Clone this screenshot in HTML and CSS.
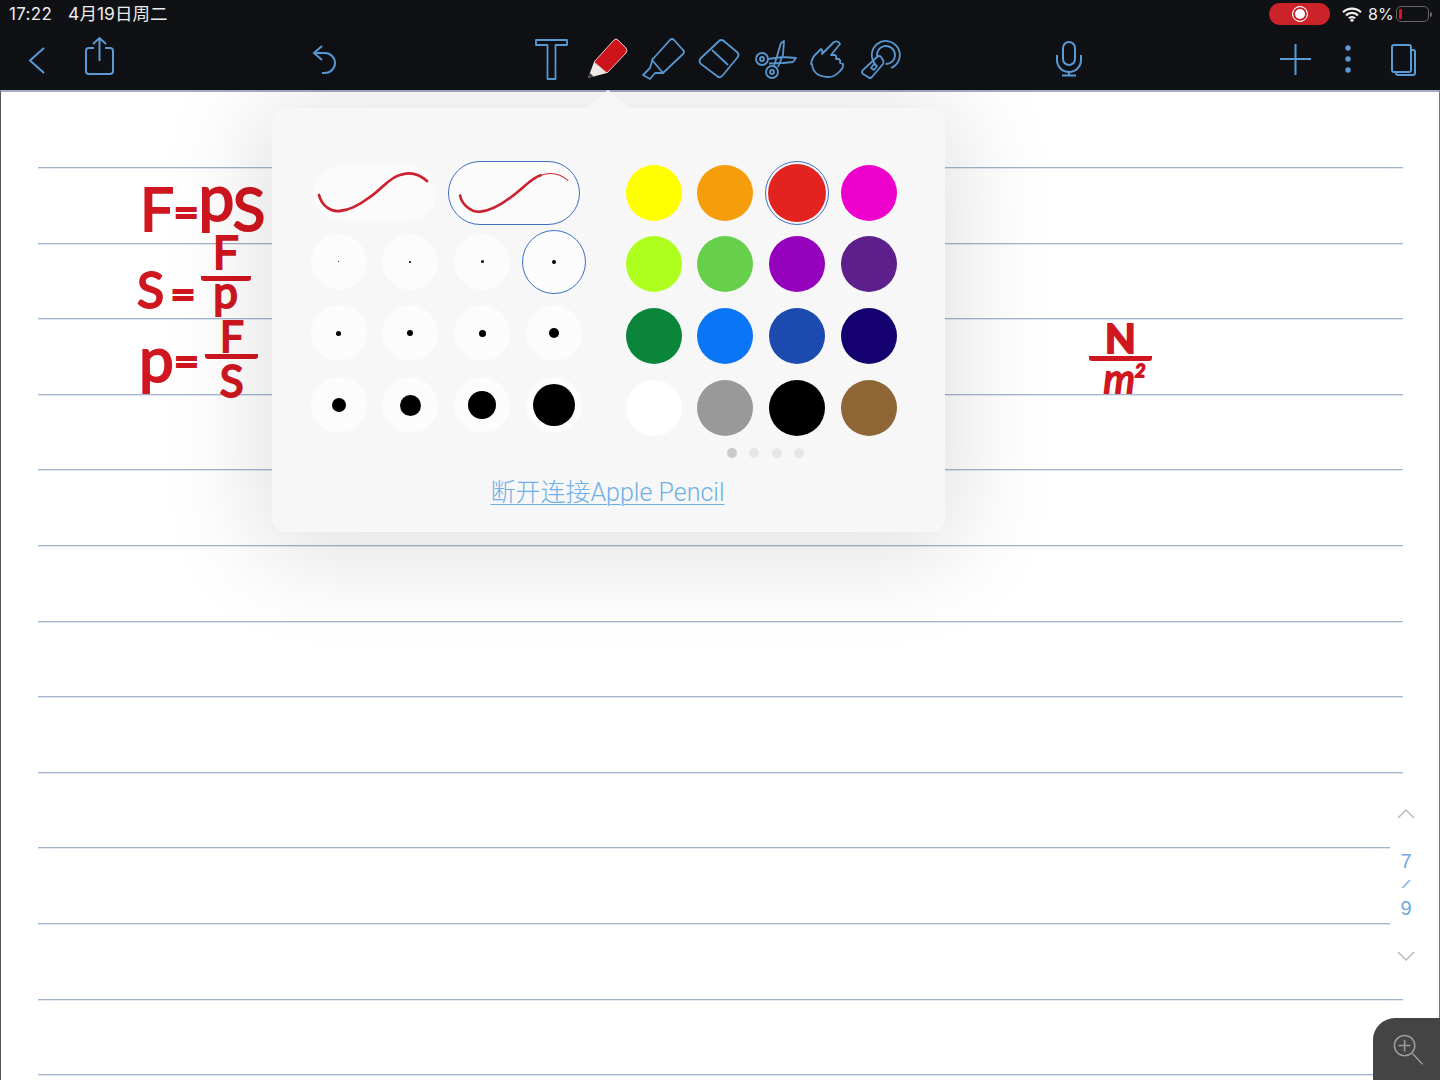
FILE: index.html
```html
<!DOCTYPE html>
<html lang="zh-CN">
<head>
    <meta charset="UTF-8">
    <meta name="viewport" content="width=device-width, initial-scale=1.0">
    <title>Notes</title>
    <link rel="stylesheet" href="styles.css">
</head>
<body>
<div class="screen">

    <header class="topbar">
        <div class="statusbar">
            <div class="clock"><span class="time">17:22</span><span class="date">4月19日周二</span></div>
            <div class="status-right">
                <div class="rec-pill"><span class="rec-dot"></span></div>
                <svg class="wifi" viewBox="0 0 20 15"><path d="M1 5.2a13 13 0 0 1 18 0M4 8.400a8.600 8.600 0 0 1 12 0M6.900 11.300a4.400 4.400 0 0 1 6.200 0" fill="none" stroke="#f4f4f4" stroke-width="2.200"/><circle cx="10" cy="13.200" r="1.600" fill="#f4f4f4"/></svg>
                <span class="battery-text">8%</span>
                <div class="battery"><span class="battery-level"></span></div>
                <span class="battery-tip"></span>
            </div>
        </div>

        <nav class="toolbar">
            <svg class="tool back" viewBox="0 0 50 50"><path d="M31 14L17 26.500 31 39"/></svg>
            <svg class="tool share" viewBox="0 0 50 50"><path d="M20 14h-5a3 3 0 0 0-3 3v20a3 3 0 0 0 3 3h21a3 3 0 0 0 3-3V17a3 3 0 0 0-3-3h-5M25.500 4v23M19 10l6.500-6 6.500 6"/></svg>
            <svg class="tool undo" viewBox="0 0 50 50"><path d="M23 12l-8 7 8 7M15 19h11a10 10 0 0 1 0 20h-3"/></svg>

            <div class="tool-group">
                <svg class="pen-tool" viewBox="0 0 56 56"><path d="M13 9h31v5H32.500v34h-8V14H13z"/></svg>
                <svg class="pen-tool" viewBox="0 0 56 56">
                    <path class="pencil-wood" d="M15 31l13 11-19 5z"/>
                    <path class="pencil-lead" d="M9 47l1.500-5.500 4 4z"/>
                    <path class="pencil-body" d="M15 31L35 9q2-2 4 0l8 8q2 3 0 5L28 42z"/>
                </svg>
                <svg class="pen-tool" viewBox="0 0 56 56"><path d="M17 29L35 9q2-2 4 0l9 10q2 2 0 4L28 42zM18 27l-3 10-7 7 7 4 5-6h8"/></svg>
                <svg class="pen-tool" viewBox="0 0 56 56"><path d="M27 11q3-4 7 0l12 10q3 3 0 6L32 44q-3 4-6 1L10 33q-3-3 0-6zM21 19l16 15"/></svg>
                <svg class="pen-tool" viewBox="0 0 56 56"><circle cx="15" cy="28" r="6"/><circle cx="15" cy="28" r="2"/><circle cx="25" cy="41" r="6"/><circle cx="25" cy="41" r="2"/><path d="M21 28l15-2 13 1-3 4-10 1-14 .5M27 35l7-23 3-2-1 14-5 12"/></svg>
                <svg class="pen-tool hand" viewBox="0 0 56 56"><path d="M9 33q1-6 4-9l6-6q2 1 1 5L32 11q4-2 6 2l-9 11h4q2 1 1 4h3q2 2 1 4l3 1q1 3-3 7-6 7-13 6-14-1-15-13z"/></svg>
                <svg class="pen-tool" viewBox="0 0 56 56"><path d="M18 34a14 14 0 1 1 15 3M19.500 27a9 9 0 1 1 8 6M19 26q2-2 4 0l2 3q1 2 0 4L14 46q-2 2-4 0l-5-3q-2-2 0-4zM16 33l3 2-3 4-3-2z"/></svg>
            </div>

            <svg class="tool mic" viewBox="0 0 50 50"><rect x="19" y="8" width="12" height="23" rx="6"/><path d="M13 21v5a12 12 0 0 0 24 0v-5M25 38v3M18 41.500h14"/></svg>
            <svg class="tool plus" viewBox="0 0 50 50"><path d="M10 25h31M25.500 10v31"/></svg>
            <svg class="tool dots" viewBox="0 0 50 50"><circle cx="25" cy="14" r="2.700"/><circle cx="25" cy="25" r="2.700"/><circle cx="25" cy="36" r="2.700"/></svg>
            <svg class="tool pages" viewBox="0 0 50 50"><rect x="14" y="11" width="19" height="27" rx="2"/><path d="M33 16h2a2 2 0 0 1 2 2v21a2 2 0 0 1-2 2H20a2 2 0 0 1-2-2v-1"/></svg>
        </nav>
    </header>

    <main class="sheet">
        <div class="rules">
            <div class="rule"></div><div class="rule"></div><div class="rule"></div>
            <div class="rule"></div><div class="rule"></div><div class="rule"></div>
            <div class="rule"></div><div class="rule"></div><div class="rule"></div>
            <div class="rule short"></div><div class="rule short"></div><div class="rule"></div>
            <div class="rule"></div>
        </div>

        <!-- handwritten notes, placed freely on the page -->
        <div class="ink ink-one">F<span class="eq">=</span><span class="tall-p">p</span>S</div>
        <div class="ink ink-two">
            <span class="lhs">S<span class="eq">=</span></span>
            <span class="frac"><span class="num">F</span><span class="den">p</span></span>
        </div>
        <div class="ink ink-three">
            <span class="lhs"><span class="tall-p">p</span><span class="eq">=</span></span>
            <span class="frac"><span class="num">F</span><span class="den">S</span></span>
        </div>
        <div class="ink ink-four">
            <span class="frac"><span class="num">N</span><span class="den">m<sup>2</sup></span></span>
        </div>

        <div class="popover">
            <div class="panels">
                <div class="left-panel">
                    <div class="strokes">
                        <div class="stroke-pill">
                            <svg class="stroke-line" viewBox="0 0 122 56"><path d="M5 30C8 42 18 47 26 46 38 45 48 38 56 32 68 24 76 12 86 10 94 7 104 8 113 16" stroke-width="2.800"/></svg>
                        </div>
                        <div class="stroke-pill selected">
                            <svg class="stroke-line" viewBox="0 0 129 61"><path d="M11 33C13 43 23 50 31 49 43 48 53 41 61 35 73 27 81 16 91 13" stroke-width="2.600"/><path d="M91 13C99 10 109 10 118 18" stroke-width="1"/></svg>
                        </div>
                    </div>
                    <div class="size-grid">
                        <div class="size"><span style="width:1px;height:1px"></span></div>
                        <div class="size"><span style="width:2px;height:2px"></span></div>
                        <div class="size"><span style="width:3px;height:3px"></span></div>
                        <div class="size selected"><span style="width:4px;height:4px"></span></div>
                        <div class="size"><span style="width:5px;height:5px"></span></div>
                        <div class="size"><span style="width:6px;height:6px"></span></div>
                        <div class="size"><span style="width:7px;height:7px"></span></div>
                        <div class="size"><span style="width:10px;height:10px"></span></div>
                        <div class="size"><span style="width:14px;height:14px"></span></div>
                        <div class="size"><span style="width:21px;height:21px"></span></div>
                        <div class="size"><span style="width:28px;height:28px"></span></div>
                        <div class="size"><span style="width:42px;height:42px"></span></div>
                    </div>
                </div>
                <div class="right-panel">
                    <div class="color-grid">
                        <div class="color" style="background:#ffff00"></div>
                        <div class="color" style="background:#f59d0a"></div>
                        <div class="color selected" style="background:#e2231f"></div>
                        <div class="color" style="background:#ee00cc"></div>
                        <div class="color" style="background:#aeff1e"></div>
                        <div class="color" style="background:#66cf4c"></div>
                        <div class="color" style="background:#9400bb"></div>
                        <div class="color" style="background:#5d1f8c"></div>
                        <div class="color" style="background:#0a853a"></div>
                        <div class="color" style="background:#0a75f5"></div>
                        <div class="color" style="background:#1c4aae"></div>
                        <div class="color" style="background:#150070"></div>
                        <div class="color" style="background:#ffffff"></div>
                        <div class="color" style="background:#999999"></div>
                        <div class="color" style="background:#000000"></div>
                        <div class="color" style="background:#8e6534"></div>
                    </div>
                    <div class="page-dots">
                        <span class="active"></span><span></span><span></span><span></span>
                    </div>
                </div>
            </div>
            <a class="pencil-link">断开连接Apple Pencil</a>
        </div>

        <div class="pager">
            <svg class="chevron" viewBox="0 0 20 12"><path d="M2 11l8-8 8 8"/></svg>
            <div class="page-num first">7</div>
            <div class="page-slash">/</div>
            <div class="page-num">9</div>
            <svg class="chevron down" viewBox="0 0 20 12"><path d="M2 2l8 8 8-8"/></svg>
        </div>

        <div class="zoom-btn">
            <svg viewBox="0 0 40 40"><circle cx="16" cy="16" r="12"/><path d="M16 9v14M9 16h14M25 25l12 13"/></svg>
        </div>
    </main>

</div>
</body>
</html>
```

FILE: styles.css
```css
* {
    box-sizing: border-box;
}
html, body {
    margin: 0;
    height: 100%;
    overflow: hidden;
}
body {
    font-family: Inter, "Noto Sans CJK SC", sans-serif;
    background-color: #fff;
}
.screen {
    width: 1440px;
    height: 1080px;
    display: flex;
    flex-direction: column;
    overflow: hidden;
}

/* TOP BAR */
.topbar {
    height: 90px;
    background-color: #101114;
    flex-shrink: 0;
}
.statusbar {
    height: 28px;
    display: flex;
    justify-content: space-between;
    align-items: center;
    color: #ececec;
    font-size: 17px;
}
.clock {
    margin-left: 9px;
    display: flex;
    align-items: center;
    gap: 16px;
}
.time {
    letter-spacing: 0.3px;
}
.date {
    font-size: 17.5px;
    margin-bottom: 3px;
}
.status-right {
    display: flex;
    align-items: center;
    margin-right: 8px;
}
.rec-pill {
    width: 61px;
    height: 22px;
    border-radius: 11px;
    background-color: #cc2229;
    display: flex;
    align-items: center;
    justify-content: center;
}
.rec-dot {
    width: 16px;
    height: 16px;
    border-radius: 50%;
    border: 1.5px solid #fff;
    background-color: #fff;
    box-shadow: inset 0 0 0 2px #cc2229;
}
.wifi {
    width: 20px;
    height: 15px;
    margin-left: 12px;
}
.battery-text {
    margin-left: 6px;
    width: 28px;
    font-size: 16px;
}
.battery {
    width: 33px;
    height: 16px;
    border: 1.5px solid #666;
    border-radius: 5px;
    padding: 2px;
}
.battery-level {
    display: block;
    width: 3px;
    height: 100%;
    background-color: #e0101a;
    border-radius: 1px;
}
.battery-tip {
    width: 2px;
    height: 5px;
    background-color: #666;
    border-radius: 0 2px 2px 0;
    margin-left: 1px;
}
.toolbar {
    height: 62px;
    display: flex;
    align-items: center;
}
.tool {
    width: 50px;
    height: 50px;
    fill: none;
    stroke: #5a9ad6;
    stroke-width: 2;
    flex-shrink: 0;
}
.back { margin-left: 13px; }
.share { margin-left: 11px; }
.undo { margin-left: 175px; }
.mic { margin-left: 130px; }
.plus { margin-left: 176px; }
.dots { margin-left: 3px; }
.dots circle { fill: #5a9ad6; stroke: none; }
.pages { margin-left: 5px; }
.tool-group {
    display: flex;
    margin-left: 174px;
}
.pen-tool {
    width: 56px;
    height: 56px;
    fill: none;
    stroke: #5a9ad6;
    stroke-width: 1.8;
    stroke-linejoin: round;
}
.pen-tool .pencil-body {
    fill: #d2141c;
    stroke: #e6cccc;
    stroke-width: 1;
}
.pen-tool .pencil-wood {
    fill: #f4f0ee;
    stroke: none;
}
.pen-tool .pencil-lead {
    fill: #444;
    stroke: none;
}
.hand { margin-left: -1px; }

/* PAGE */
.sheet {
    position: relative;
    flex: 1;
    border-top: 2px solid #a3abc9;
    border-left: 1px solid #555;
    border-right: 1px solid #777;
    background-color: #fff;
}
.rules {
    padding: 75px 36px 0 37px;
}
.rule {
    height: 75.6px;
    border-bottom: 1px solid #a3b4cf;
    box-shadow: 0 1px 0 rgba(170, 190, 215, 0.35);
}
.rule:first-child {
    height: 1px;
}
.rule.short {
    margin-right: 13px;
}

/* HANDWRITING */
.ink {
    position: absolute;
    color: #d0161f;
    font-family: Lato, "Liberation Sans", sans-serif;
    font-weight: 400;
    -webkit-text-stroke: 2px #d0161f;
    line-height: 1;
    white-space: nowrap;
}
.ink .eq {
    font-size: 44px;
}
.ink-one {
    left: 139px;
    top: 73px;
    font-size: 60px;
    letter-spacing: -1.5px;
}
.ink-one .eq {
    margin: 0 1px;
    vertical-align: 3px;
}
.ink-one .tall-p {
    font-size: 64px;
    vertical-align: 10px;
}
.ink-two,
.ink-three {
    display: flex;
    align-items: flex-start;
}
.ink-two {
    left: 136px;
    top: 137px;
}
.ink-three {
    left: 138px;
    top: 223px;
}
.ink-four {
    left: 1088px;
    top: 225.5px;
}
.lhs {
    display: flex;
    align-items: flex-start;
}
.ink-two .lhs {
    font-size: 50px;
    margin-top: 35px;
}
.ink-two .eq {
    margin: 7px 0 0 6px;
}
.ink-three .tall-p {
    font-size: 62px;
    margin-top: 12px;
}
.ink-three .eq {
    margin-top: 23px;
}
.frac {
    display: flex;
    flex-direction: column;
    align-items: center;
}
.ink-two .frac {
    margin-left: 5px;
}
.ink-three .frac {
    margin-left: 6px;
}
.num {
    width: 50px;
    height: 52px;
    font-size: 46px;
    text-align: center;
    border-bottom: 5px solid #d0161f;
    border-radius: 3px;
}
.den {
    font-size: 44px;
    margin-top: -12px;
}
.ink-three .num {
    width: 53px;
    height: 44px;
    font-size: 42px;
}
.ink-three .den {
    margin-top: -1px;
}
.ink-four .num {
    width: 63px;
    height: 43.5px;
    font-size: 40px;
    font-weight: 700;
}
.ink-four .den {
    font-size: 40px;
    margin: -3.5px 0 0 8px;
    font-style: italic;
}
.ink-four sup {
    font-size: 18px;
    vertical-align: 16px;
    line-height: 0;
}

/* POPOVER */
.popover {
    position: absolute;
    left: 271px;
    top: 16px;
    width: 673px;
    height: 424px;
    padding: 49px 0 0 31px;
    background-color: #f7f7f7;
    border-radius: 14px;
    box-shadow: 0 10px 100px 15px rgba(0, 0, 0, 0.12);
    display: flex;
    flex-direction: column;
}
.popover::before {
    content: "";
    position: absolute;
    left: 314px;
    top: -18px;
    border-left: 22px solid transparent;
    border-right: 22px solid transparent;
    border-bottom: 18px solid #f7f7f7;
}
.panels {
    display: flex;
    gap: 28px;
}
.left-panel {
    width: 287px;
    padding-top: 4px;
}
.strokes {
    height: 65px;
    display: flex;
    align-items: flex-start;
    gap: 12px;
    padding-left: 11px;
}
.stroke-pill {
    width: 122px;
    height: 56px;
    margin-top: 4px;
    border-radius: 28px;
    background-color: #fbfbfb;
}
.stroke-pill.selected {
    width: 132px;
    height: 64px;
    margin-top: 0;
    border-radius: 32px;
    border: 1.5px solid #3f6fc4;
}
.stroke-line {
    display: block;
    width: 100%;
    height: 100%;
    fill: none;
    stroke: #cc2230;
    stroke-linecap: round;
}
.size-grid {
    display: grid;
    grid-template-columns: repeat(4, 71.67px);
    grid-auto-rows: 71.67px;
    place-items: center;
}
.size {
    width: 56px;
    height: 56px;
    border-radius: 50%;
    background-color: #fcfcfc;
    display: flex;
    align-items: center;
    justify-content: center;
}
.size span {
    border-radius: 50%;
    background-color: #000;
}
.size.selected {
    width: 64px;
    height: 64px;
    border: 1.5px solid #3f6fc4;
}
.color-grid {
    display: grid;
    grid-template-columns: repeat(4, 71.67px);
    grid-auto-rows: 71.67px;
    place-items: center;
}
.color {
    width: 56px;
    height: 56px;
    border-radius: 50%;
}
.color.selected {
    width: 58px;
    height: 58px;
    outline: 1px solid #3f6fc4;
    outline-offset: 2px;
}
.page-dots {
    display: flex;
    justify-content: center;
    gap: 12.400px;
    padding-left: 8px;
    margin-top: 4px;
}
.page-dots span {
    width: 10px;
    height: 10px;
    border-radius: 50%;
    background-color: #e6e6e6;
}
.page-dots .active {
    background-color: #cacaca;
}
.pencil-link {
    align-self: center;
    margin: 18px 0 0 -33px;
    font-family: Roboto, "Noto Sans CJK SC", sans-serif;
    font-size: 25px;
    font-weight: 300;
    line-height: 34px;
    color: #6eb0e8;
    text-decoration: underline;
    text-underline-offset: 3px;
    text-decoration-thickness: 1px;
}

/* PAGER */
.pager {
    position: absolute;
    right: 23px;
    top: 715px;
    width: 20px;
    display: flex;
    flex-direction: column;
    align-items: center;
    color: #6ea8de;
}
.chevron {
    width: 20px;
    height: 12px;
    fill: none;
    stroke: #b8bcbf;
    stroke-width: 1.5;
}
.page-num {
    font-family: "Liberation Sans", sans-serif;
    font-size: 20px;
    line-height: 24px;
}
.page-num.first {
    margin-top: 30px;
}
.page-slash {
    font-size: 14px;
    line-height: 23px;
    font-family: "Liberation Sans", sans-serif;
    transform: rotate(28deg);
}
.chevron.down {
    margin-top: 30px;
}
.zoom-btn {
    position: absolute;
    right: -1px;
    bottom: 0;
    width: 67px;
    height: 62px;
    background-color: #444;
    border-top-left-radius: 22px;
    padding: 14px 0 0 18px;
}
.zoom-btn svg {
    display: block;
    width: 34px;
    height: 34px;
    fill: none;
    stroke: #9a9a9a;
    stroke-width: 1.800;
}
```
